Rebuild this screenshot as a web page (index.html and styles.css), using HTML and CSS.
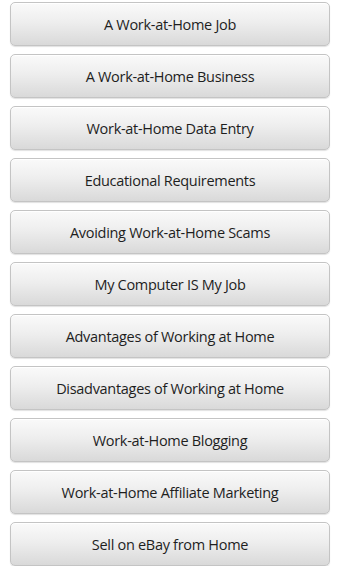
FILE: index.html
```html
<!DOCTYPE html>
<html>
<head>
<meta charset="utf-8">
<link rel="stylesheet" href="styles.css">
</head>
<body>
<div class="list">
  <div class="btn">A Work-at-Home Job</div>
  <div class="btn">A Work-at-Home Business</div>
  <div class="btn">Work-at-Home Data Entry</div>
  <div class="btn">Educational Requirements</div>
  <div class="btn">Avoiding Work-at-Home Scams</div>
  <div class="btn">My Computer IS My Job</div>
  <div class="btn">Advantages of Working at Home</div>
  <div class="btn">Disadvantages of Working at Home</div>
  <div class="btn">Work-at-Home Blogging</div>
  <div class="btn">Work-at-Home Affiliate Marketing</div>
  <div class="btn">Sell on eBay from Home</div>
</div>
</body>
</html>
```
FILE: styles.css
```css
html, body {
  margin: 0;
  padding: 0;
  background: #ffffff;
  overflow: hidden;
}
.list {
  display: flex;
  flex-direction: column;
  gap: 8px;
  padding: 2px 10px 0 10px;
}
.btn {
  height: 44px;
  flex: none;
  box-sizing: border-box;
  border: 1px solid #c4c4c4;
  border-radius: 5px;
  background: linear-gradient(to bottom, #fafafa 0%, #eeeeee 45%, #d9d9d9 100%);
  box-shadow: 0 1px 1px rgba(0,0,0,0.12), inset 0 1px 0 #ffffff;
  display: flex;
  align-items: center;
  justify-content: center;
  font-family: "Open Sans", "Noto Sans", sans-serif;
  font-size: 14.5px;
  letter-spacing: -0.3px;
  color: #1e1e1e;
}
```
